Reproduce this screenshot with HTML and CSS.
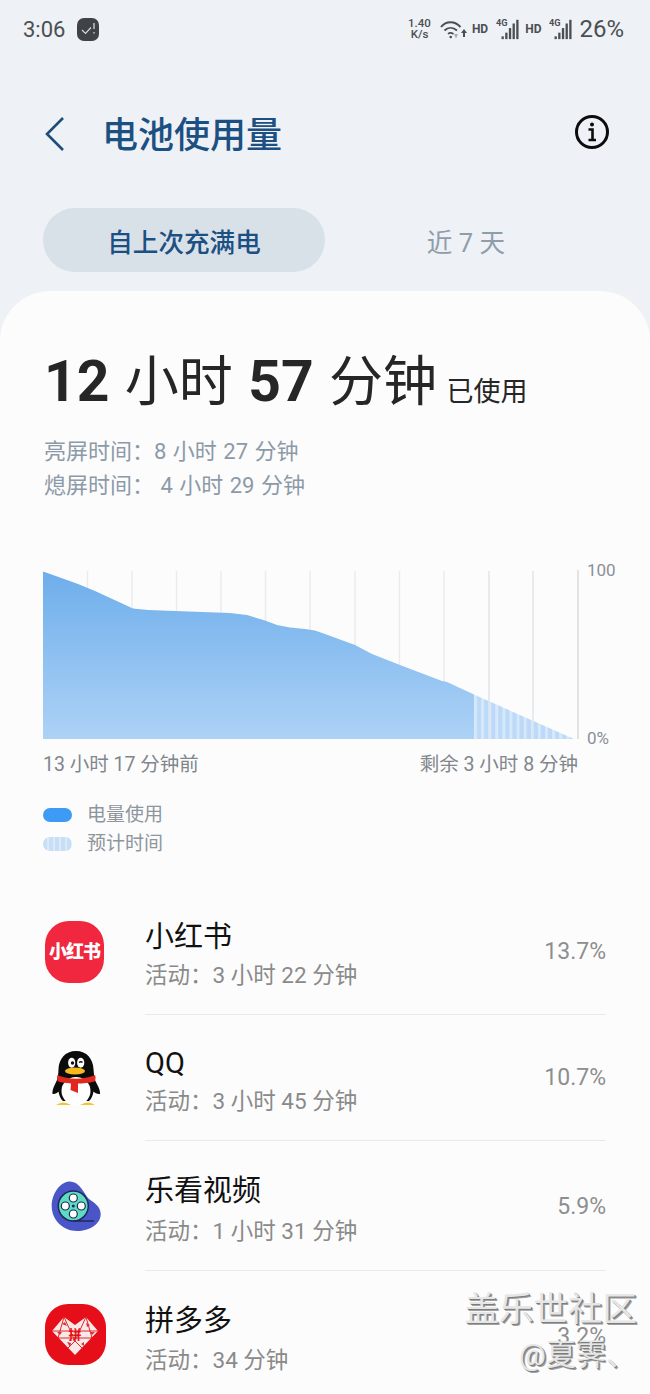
FILE: index.html
```html
<!DOCTYPE html>
<html>

<head>
    <title>电池使用量</title>
    <meta charset="utf-8">
    <meta name="viewport" content="width=device-width, initial-scale=1">
    <link rel="stylesheet" href="styles.css">
</head>

<body>
    <div id="screen">
        <div class="status-bar">
            <div class="status-left">
                <span class="clock">3:06</span>
                <svg class="notif-icon" viewBox="0 0 22 23" width="22" height="23">
                    <rect x="0" y="0" width="22" height="23" rx="7" fill="#3f4347" />
                    <path d="M5 12l3.500 3.500L14 9.500" fill="none" stroke="#d5d8da" stroke-width="1.200" />
                    <path d="M17 5v6M17 14v1.500" fill="none" stroke="#d5d8da" stroke-width="1.300" />
                </svg>
            </div>
            <div class="status-right">
                <div class="speed"><span>1.40</span><span>K/s</span></div>
                <svg class="wifi" viewBox="0 0 27 20" width="27" height="20">
                    <path d="M1 8C6 1.500 15 1.500 20.500 8" fill="none" stroke="#4b4f53" stroke-width="2" />
                    <path d="M4.500 11.500C8 8 13 8 17 11.500" fill="none" stroke="#4b4f53" stroke-width="1.900" />
                    <path d="M8 15C9.500 13.500 11.500 13.500 13.500 15" fill="none" stroke="#4b4f53" stroke-width="1.700" />
                    <circle cx="10.700" cy="18" r="1.300" fill="#4b4f53" />
                    <path d="M14 15h4l-2 4.500z" fill="#a9adb1" />
                    <path d="M24 10l3 4h-2v4h-2v-4h-2z" fill="#4b4f53" />
                </svg>
                <span class="hd">HD</span>
                <svg class="signal" viewBox="0 0 25 24" width="23" height="24">
                    <text x="0" y="9" class="signal-text">4G</text>
                    <rect x="6" y="20" width="2.500" height="3" fill="#4b4f53" />
                    <rect x="10" y="16" width="2.500" height="7" fill="#4b4f53" />
                    <rect x="14" y="11" width="2.500" height="12" fill="#4b4f53" />
                    <rect x="18" y="6" width="2.500" height="17" fill="#4b4f53" />
                    <rect x="22" y="2" width="2.500" height="21" fill="#4b4f53" />
                </svg>
                <span class="hd">HD</span>
                <svg class="signal" viewBox="0 0 25 24" width="23" height="24">
                    <text x="0" y="9" class="signal-text">4G</text>
                    <rect x="6" y="20" width="2.500" height="3" fill="#4b4f53" />
                    <rect x="10" y="16" width="2.500" height="7" fill="#4b4f53" />
                    <rect x="14" y="11" width="2.500" height="12" fill="#4b4f53" />
                    <rect x="18" y="6" width="2.500" height="17" fill="#4b4f53" />
                    <rect x="22" y="2" width="2.500" height="21" fill="#4b4f53" />
                </svg>
                <span class="battery">26%</span>
            </div>
        </div>

        <div class="title-row">
            <svg class="back" viewBox="0 0 22 36" width="22" height="36">
                <path d="M19 2L3 18l16 16" fill="none" stroke="#1d4d79" stroke-width="2.600" />
            </svg>
            <h1 class="page-title">电池使用量</h1>
            <svg class="info" viewBox="0 0 36 36" width="36" height="36">
                <circle cx="18" cy="18" r="15.500" fill="none" stroke="#0c0c0c" stroke-width="3" />
                <circle cx="18" cy="10.500" r="2" fill="#0c0c0c" />
                <path d="M14.500 15.500H18.500V26M14.500 26H22" fill="none" stroke="#0c0c0c" stroke-width="2.600" />
            </svg>
        </div>

        <div class="tabs">
            <div class="tab tab-active">自上次充满电</div>
            <div class="tab">近 7 天</div>
        </div>

        <div class="card">
            <div class="total">
                <b>12</b> 小时 <b>57</b> 分钟 <small>已使用</small>
            </div>
            <div class="stats">
                <div>亮屏时间：8 小时 27 分钟</div>
                <div>熄屏时间：&nbsp;4 小时 29 分钟</div>
            </div>

            <div class="chart">
                <svg class="chart-svg" viewBox="43 570 536 170" width="536" height="170">
                    <defs>
                        <linearGradient id="areaFill" x1="0" y1="0" x2="0" y2="1">
                            <stop offset="0" stop-color="#6eaeeb" />
                            <stop offset="1" stop-color="#add2f6" />
                        </linearGradient>
                        <pattern id="stripes" patternUnits="userSpaceOnUse" x="474" y="0" width="7.100" height="10">
                            <rect width="7.100" height="10" fill="#d6e8fb" />
                            <rect x="3" width="4.100" height="10" fill="#bcd9f7" />
                        </pattern>
                    </defs>
                    <path d="M87.500 571V739M132 571V739M176.500 571V739M221 571V739M265.500 571V739M310 571V739M355 571V739M399.500 571V739M444 571V739M489 571V739M533 571V739" stroke="#ebebeb" stroke-width="1.500" />
                    <path d="M578 570V739" stroke="#e2e2e2" stroke-width="2" />
                    <polygon fill="url(#areaFill)" points="43,571.500 53,575 78,584 95,591 133,608.500 148,610 175,611 230,613 247,615 265,620.500 277,625 290,627.500 305,629 315,630.500 325,634 355,645 372,654 400,665 442,681 447,682 474,694.500 474,739 43,739" />
                    <polygon fill="url(#stripes)" points="474,694.500 574,739 474,739" />
                    <path d="M489 571V739M533 571V739" stroke="#dfe5ea" stroke-width="1.200" opacity="0.700" />
                </svg>
                <div class="axis">
                    <span>100</span>
                    <span>0%</span>
                </div>
            </div>
            <div class="chart-labels">
                <span>13 小时 17 分钟前</span>
                <span>剩余 3 小时 8 分钟</span>
            </div>

            <div class="legend">
                <div class="legend-item"><i class="swatch swatch-used"></i>电量使用</div>
                <div class="legend-item"><i class="swatch swatch-est"></i>预计时间</div>
            </div>

            <div class="list">
                <div class="row row-first">
                    <div class="app-icon">
                        <div class="xhs">小红书</div>
                    </div>
                    <div class="row-body">
                        <div class="row-text">
                            <div class="app-name">小红书</div>
                            <div class="app-time">活动：3 小时 22 分钟</div>
                        </div>
                        <div class="pct">13.7%</div>
                    </div>
                </div>

                <div class="row row-short">
                    <div class="app-icon">
                        <svg viewBox="0 0 62 62" width="62" height="62">
                            <path d="M32 4C21 4 15 12 14.500 22C14.300 27 14 30 13 33C11 38 8 42 8.500 47C11 47.500 13 46 14.500 44.500C15 48 16.500 52 19 54H45C47.500 52 49 48 49.500 44.500C51 46 53.500 47.500 56 47C56.500 42 53 38 51 33C50 30 50 27 49.500 22C49 12 43 4 32 4Z" fill="#0b0b0b" />
                            <ellipse cx="32" cy="44" rx="14.500" ry="14" fill="#fff" />
                            <path d="M13.500 28C25 33 39 33 51 28C52 30 51.500 33 50.500 34.500C45 36 39 36.500 34 36.500L34 46L26.500 43L27 36.500C22 36 18 35.500 14 34.500C13 32.500 13 30 13.500 28Z" fill="#e0281f" />
                            <ellipse cx="31" cy="24" rx="10" ry="3.600" fill="#f7b91c" />
                            <ellipse cx="27.700" cy="15.700" rx="3.600" ry="5" fill="#fff" />
                            <ellipse cx="36.700" cy="15.700" rx="3.600" ry="5" fill="#fff" />
                            <circle cx="28.500" cy="16" r="1.700" fill="#111" />
                            <path d="M35 15.500q2-1.500 3.500 0" fill="none" stroke="#111" stroke-width="1.300" />
                            <path d="M12 58q7-5 15 0zM36 58q8-5 15 0z" fill="#f5c431" />
                        </svg>
                    </div>
                    <div class="row-body">
                        <div class="row-text">
                            <div class="app-name">QQ</div>
                            <div class="app-time">活动：3 小时 45 分钟</div>
                        </div>
                        <div class="pct">10.7%</div>
                    </div>
                </div>

                <div class="row">
                    <div class="app-icon">
                        <svg viewBox="0 0 62 62" width="62" height="62">
                            <path d="M24 6.700C15 8 7.700 20 7.700 31C7.700 45 19 56 33 56C46 56 56.700 49 56.700 39C56.700 31 49 27 45 24C41 21 36 5 24 6.700Z" fill="#4a55c8" />
                            <circle cx="29.300" cy="31" r="15" fill="#5fdcc0" stroke="#1c2a5c" stroke-width="1.500" />
                            <path d="M29.300 46H50" stroke="#1c2a5c" stroke-width="1.500" />
                            <circle cx="29.300" cy="23" r="4" fill="#fff" stroke="#1c2a5c" stroke-width="1.200" />
                            <circle cx="29.300" cy="39" r="4" fill="#fff" stroke="#1c2a5c" stroke-width="1.200" />
                            <circle cx="21.300" cy="31" r="4" fill="#fff" stroke="#1c2a5c" stroke-width="1.200" />
                            <circle cx="37.300" cy="31" r="4" fill="#fff" stroke="#1c2a5c" stroke-width="1.200" />
                            <circle cx="29.300" cy="31" r="1.500" fill="#1c2a5c" />
                        </svg>
                    </div>
                    <div class="row-body">
                        <div class="row-text">
                            <div class="app-name">乐看视频</div>
                            <div class="app-time">活动：1 小时 31 分钟</div>
                        </div>
                        <div class="pct">5.9%</div>
                    </div>
                </div>

                <div class="row row-last">
                    <div class="app-icon">
                        <svg viewBox="0 0 62 62" width="62" height="62">
                            <rect x="1" y="0" width="61" height="61" rx="23" fill="#e60f19" />
                            <polygon points="20,13 31,21 42,13 54,27 31,51 8,27" fill="#f6e9e7" />
                            <path d="M20 13L31 37M42 13L31 37M8 27H54M14 34H48M20 13L14 34M42 13L48 34M24 44L31 37L38 44" fill="none" stroke="#e60f19" stroke-width="0.900" />
                            <path d="M18 20l3-2 2 4zM42 19l4 2-3 2zM13 28l5 0-2 3zM46 28l5 0-3 3zM23 38l4 1-1 4zM37 40l3-2 0 4z" fill="#d5343a" />
                            <text x="31" y="35" class="pdd-char">拼</text>
                        </svg>
                    </div>
                    <div class="row-body">
                        <div class="row-text">
                            <div class="app-name">拼多多</div>
                            <div class="app-time">活动：34 分钟</div>
                        </div>
                        <div class="pct">3.2%</div>
                    </div>
                </div>
            </div>
        </div>

        <div class="watermark">
            <div class="wm-big">盖乐世社区</div>
            <div class="wm-small">@夏霁、</div>
        </div>
    </div>
</body>

</html>
```

FILE: styles.css
```css
html,
body {
    margin: 0;
    padding: 0;
}

body {
    background-color: #eef1f5;
    font-family: Roboto, "Noto Sans CJK SC", sans-serif;
}

#screen {
    position: relative;
    width: 650px;
    height: 1394px;
    overflow: hidden;
    background-color: #eef1f5;
}

.status-bar {
    display: flex;
    justify-content: space-between;
    align-items: center;
    height: 58px;
    padding: 0 26px 0 23px;
    color: #4b4f53;
}

.status-left,
.status-right {
    display: flex;
    align-items: center;
}

.clock {
    font-size: 22px;
    margin-right: 12px;
}

.speed {
    display: flex;
    flex-direction: column;
    align-items: center;
    font-size: 11.500px;
    line-height: 11.500px;
    font-weight: 500;
    margin-right: 9px;
}

.wifi {
    margin-right: 5px;
}

.hd {
    font-size: 12px;
    font-weight: 700;
    margin-right: 8px;
}

.signal {
    margin-right: 6px;
}

.signal-text {
    font-size: 10px;
    font-weight: 700;
    fill: #4b4f53;
}

.battery {
    font-size: 24px;
    margin-left: 1px;
}

.title-row {
    display: flex;
    align-items: center;
    height: 76px;
    margin-top: 38px;
    padding: 0 40px 0 44px;
}

.back {
    flex: none;
}

.page-title {
    flex: 1;
    margin: 4px 0 0 36px;
    font-size: 36px;
    line-height: 76px;
    font-weight: 500;
    color: #1c4f82;
}

.info {
    flex: none;
    margin-top: -4px;
}

.tabs {
    display: flex;
    margin: 36px 43px 0 43px;
}

.tab {
    flex: 1;
    height: 64px;
    line-height: 71px;
    border-radius: 32px;
    text-align: center;
    font-size: 25.600px;
    color: #8f9daa;
}

.tab-active {
    background-color: #d9e1e8;
    color: #1c4f82;
    font-weight: 500;
}

.card {
    margin-top: 19px;
    height: 1103px;
    padding-top: 61px;
    box-sizing: border-box;
    border-radius: 50px 50px 0 0;
    background-color: #fcfcfc;
}

.total {
    margin-left: 44px;
    font-size: 54px;
    line-height: 60px;
    word-spacing: 2px;
    color: #262626;
    white-space: nowrap;
}

.total b {
    font-size: 57px;
    font-weight: 700;
}

.total small {
    margin-left: -6px;
    font-size: 27px;
}

.stats {
    margin: 13px 0 0 44px;
    font-size: 22px;
    word-spacing: 1px;
    line-height: 34px;
    color: #8c9aa8;
}

.chart {
    display: flex;
    margin: 67px 0 0 43px;
}

.chart-svg {
    display: block;
    flex: none;
}

.axis {
    display: flex;
    flex-direction: column;
    justify-content: space-between;
    margin: -10px 0 -8px 8px;
    font-size: 17px;
    line-height: 20px;
    color: #8a9097;
}

.chart-labels {
    display: flex;
    justify-content: space-between;
    width: 535px;
    margin: 13px 0 0 43px;
    font-size: 19.500px;
    line-height: 24px;
    color: #80868c;
}

.legend {
    margin: 23px 0 0 43px;
    font-size: 19px;
    line-height: 29px;
    color: #8e959c;
}

.legend-item {
    display: flex;
    align-items: center;
}

.swatch {
    display: block;
    width: 29px;
    height: 14px;
    border-radius: 7px;
    margin-right: 15px;
}

.swatch-used {
    background-color: #3d9bf5;
}

.swatch-est {
    background: repeating-linear-gradient(90deg, #c6def6 0 4px, #dbe9f8 4px 6px);
}

.list {
    margin-top: 31px;
}

.row {
    display: flex;
    align-items: center;
}

.app-icon {
    flex: none;
    display: flex;
    width: 62px;
    height: 62px;
    margin: 0 39px 0 44px;
}

.app-icon svg {
    display: block;
}

.xhs {
    width: 59px;
    height: 62px;
    margin-left: 1px;
    border-radius: 24px;
    background-color: #f0273f;
    color: #fff;
    font-size: 18px;
    font-weight: 900;
    letter-spacing: -1px;
    line-height: 62px;
    text-align: center;
    white-space: nowrap;
}

.row-body {
    flex: 1;
    display: flex;
    align-items: center;
    justify-content: space-between;
    margin-right: 44px;
    padding: 32px 0 21px;
    border-bottom: 1px solid #e9e9e9;
}

.row-first .row-body {
    padding-top: 30px;
}

.row-short .row-body {
    padding-top: 30px;
}

.row-last .row-body {
    border-bottom: 0;
}

.app-name {
    font-size: 29px;
    line-height: 36px;
    color: #111;
}

.app-time {
    margin-top: 4px;
    font-size: 22.500px;
    line-height: 36px;
    color: #8a8a8a;
}

.row-last .app-time {
    margin-top: 3px;
}

.row-first .app-time,
.row-short .app-time {
    margin-top: 2px;
}

.pct {
    margin-bottom: 9px;
    font-size: 23px;
    color: #8e8e8e;
}

.pdd-char {
    font-size: 13px;
    font-weight: 700;
    fill: #e60f19;
    text-anchor: middle;
}

/* watermark sits over the last row */
.watermark {
    position: absolute;
    right: 13px;
    top: 1288px;
    text-align: right;
    color: #e6e6e6;
    text-shadow: 1px 1px 0 #7d7d7d, 2px 2px 0 #a0a0a0;
}

.wm-big {
    font-size: 34.500px;
    line-height: 42px;
}

.wm-small {
    margin: 4px 1px 0 0;
    font-size: 30px;
    line-height: 42px;
}
```
